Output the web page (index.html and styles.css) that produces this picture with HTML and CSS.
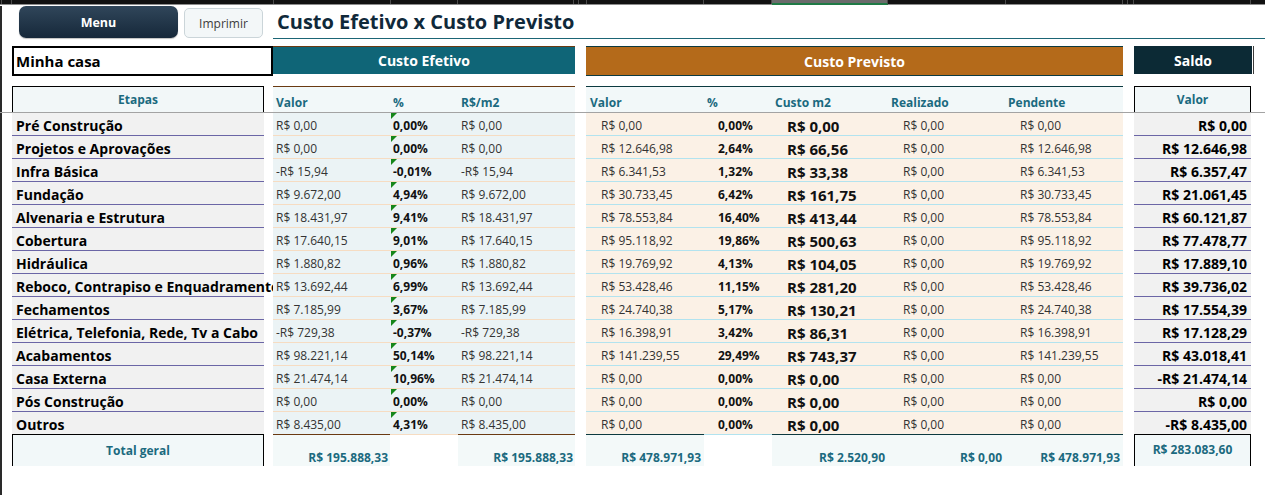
FILE: index.html
```html
<!DOCTYPE html>
<html lang="pt-BR">
<head>
<meta charset="utf-8">
<title>Custo Efetivo x Custo Previsto</title>
<link rel="stylesheet" href="styles.css">
</head>
<body>
<div class="colbar">
  <span style="width:2px"></span><span style="width:10px"></span><span style="width:262px"></span><span style="width:117px"></span><span style="width:67px"></span><span style="width:116px"></span><span style="width:5px"></span><span style="width:8px"></span><span style="width:117px"></span><span style="width:68px"></span><span class="sel" style="width:116px"></span><span style="width:118px"></span><span style="width:117px"></span><span style="width:5px"></span><span style="width:6px"></span><span style="width:117px"></span><span class="rest"></span>
</div>
<div class="sheet">
  <div class="toolbar">
    <div class="tools">
      <button class="btn-menu">Menu</button>
      <button class="btn-print">Imprimir</button>
    </div>
    <h1 class="title">Custo Efetivo x Custo Previsto</h1>
  </div>

  <div class="grid band">
    <div class="project">Minha casa</div>
    <div class="band-ef">Custo Efetivo</div>
    <div class="band-pv">Custo Previsto</div>
    <div class="band-sd">Saldo</div>
  </div>

  <div class="grid subhead">
    <div class="sh-etapas">Etapas</div>
    <div class="sh-ef c3">Valor</div>
    <div class="sh-ef">%</div>
    <div class="sh-ef">R$/m2</div>
    <div class="sh-pv c7">Valor</div>
    <div class="sh-pv">%</div>
    <div class="sh-pv">Custo m2</div>
    <div class="sh-pv">Realizado</div>
    <div class="sh-pv">Pendente</div>
    <div class="sh-sd">Valor</div>
  </div>

  <div class="freeze"></div>

  <div class="rows">
    <div class="grid row">
      <div class="lab"><div class="labin">Pré Construção</div></div>
      <div class="ef c3">R$ 0,00</div><div class="ef pct">0,00%</div><div class="ef">R$ 0,00</div>
      <div class="pv c7">R$ 0,00</div><div class="pv pct">0,00%</div><div class="pv m2">R$ 0,00</div><div class="pv">R$ 0,00</div><div class="pv">R$ 0,00</div>
      <div class="sd">R$ 0,00</div>
    </div>
    <div class="grid row">
      <div class="lab"><div class="labin">Projetos e Aprovações</div></div>
      <div class="ef c3">R$ 0,00</div><div class="ef pct">0,00%</div><div class="ef">R$ 0,00</div>
      <div class="pv c7">R$ 12.646,98</div><div class="pv pct">2,64%</div><div class="pv m2">R$ 66,56</div><div class="pv">R$ 0,00</div><div class="pv">R$ 12.646,98</div>
      <div class="sd">R$ 12.646,98</div>
    </div>
    <div class="grid row">
      <div class="lab"><div class="labin">Infra Básica</div></div>
      <div class="ef c3">-R$ 15,94</div><div class="ef pct">-0,01%</div><div class="ef">-R$ 15,94</div>
      <div class="pv c7">R$ 6.341,53</div><div class="pv pct">1,32%</div><div class="pv m2">R$ 33,38</div><div class="pv">R$ 0,00</div><div class="pv">R$ 6.341,53</div>
      <div class="sd">R$ 6.357,47</div>
    </div>
    <div class="grid row">
      <div class="lab"><div class="labin">Fundação</div></div>
      <div class="ef c3">R$ 9.672,00</div><div class="ef pct">4,94%</div><div class="ef">R$ 9.672,00</div>
      <div class="pv c7">R$ 30.733,45</div><div class="pv pct">6,42%</div><div class="pv m2">R$ 161,75</div><div class="pv">R$ 0,00</div><div class="pv">R$ 30.733,45</div>
      <div class="sd">R$ 21.061,45</div>
    </div>
    <div class="grid row">
      <div class="lab"><div class="labin">Alvenaria e Estrutura</div></div>
      <div class="ef c3">R$ 18.431,97</div><div class="ef pct">9,41%</div><div class="ef">R$ 18.431,97</div>
      <div class="pv c7">R$ 78.553,84</div><div class="pv pct">16,40%</div><div class="pv m2">R$ 413,44</div><div class="pv">R$ 0,00</div><div class="pv">R$ 78.553,84</div>
      <div class="sd">R$ 60.121,87</div>
    </div>
    <div class="grid row">
      <div class="lab"><div class="labin">Cobertura</div></div>
      <div class="ef c3">R$ 17.640,15</div><div class="ef pct">9,01%</div><div class="ef">R$ 17.640,15</div>
      <div class="pv c7">R$ 95.118,92</div><div class="pv pct">19,86%</div><div class="pv m2">R$ 500,63</div><div class="pv">R$ 0,00</div><div class="pv">R$ 95.118,92</div>
      <div class="sd">R$ 77.478,77</div>
    </div>
    <div class="grid row">
      <div class="lab"><div class="labin">Hidráulica</div></div>
      <div class="ef c3">R$ 1.880,82</div><div class="ef pct">0,96%</div><div class="ef">R$ 1.880,82</div>
      <div class="pv c7">R$ 19.769,92</div><div class="pv pct">4,13%</div><div class="pv m2">R$ 104,05</div><div class="pv">R$ 0,00</div><div class="pv">R$ 19.769,92</div>
      <div class="sd">R$ 17.889,10</div>
    </div>
    <div class="grid row">
      <div class="lab"><div class="labin">Reboco, Contrapiso e Enquadramento</div></div>
      <div class="ef c3">R$ 13.692,44</div><div class="ef pct">6,99%</div><div class="ef">R$ 13.692,44</div>
      <div class="pv c7">R$ 53.428,46</div><div class="pv pct">11,15%</div><div class="pv m2">R$ 281,20</div><div class="pv">R$ 0,00</div><div class="pv">R$ 53.428,46</div>
      <div class="sd">R$ 39.736,02</div>
    </div>
    <div class="grid row">
      <div class="lab"><div class="labin">Fechamentos</div></div>
      <div class="ef c3">R$ 7.185,99</div><div class="ef pct">3,67%</div><div class="ef">R$ 7.185,99</div>
      <div class="pv c7">R$ 24.740,38</div><div class="pv pct">5,17%</div><div class="pv m2">R$ 130,21</div><div class="pv">R$ 0,00</div><div class="pv">R$ 24.740,38</div>
      <div class="sd">R$ 17.554,39</div>
    </div>
    <div class="grid row">
      <div class="lab"><div class="labin">Elétrica, Telefonia, Rede, Tv a Cabo</div></div>
      <div class="ef c3">-R$ 729,38</div><div class="ef pct">-0,37%</div><div class="ef">-R$ 729,38</div>
      <div class="pv c7">R$ 16.398,91</div><div class="pv pct">3,42%</div><div class="pv m2">R$ 86,31</div><div class="pv">R$ 0,00</div><div class="pv">R$ 16.398,91</div>
      <div class="sd">R$ 17.128,29</div>
    </div>
    <div class="grid row">
      <div class="lab"><div class="labin">Acabamentos</div></div>
      <div class="ef c3">R$ 98.221,14</div><div class="ef pct">50,14%</div><div class="ef">R$ 98.221,14</div>
      <div class="pv c7">R$ 141.239,55</div><div class="pv pct">29,49%</div><div class="pv m2">R$ 743,37</div><div class="pv">R$ 0,00</div><div class="pv">R$ 141.239,55</div>
      <div class="sd">R$ 43.018,41</div>
    </div>
    <div class="grid row">
      <div class="lab"><div class="labin">Casa Externa</div></div>
      <div class="ef c3">R$ 21.474,14</div><div class="ef pct">10,96%</div><div class="ef">R$ 21.474,14</div>
      <div class="pv c7">R$ 0,00</div><div class="pv pct">0,00%</div><div class="pv m2">R$ 0,00</div><div class="pv">R$ 0,00</div><div class="pv">R$ 0,00</div>
      <div class="sd">-R$ 21.474,14</div>
    </div>
    <div class="grid row">
      <div class="lab"><div class="labin">Pós Construção</div></div>
      <div class="ef c3">R$ 0,00</div><div class="ef pct">0,00%</div><div class="ef">R$ 0,00</div>
      <div class="pv c7">R$ 0,00</div><div class="pv pct">0,00%</div><div class="pv m2">R$ 0,00</div><div class="pv">R$ 0,00</div><div class="pv">R$ 0,00</div>
      <div class="sd">R$ 0,00</div>
    </div>
    <div class="grid row">
      <div class="lab"><div class="labin">Outros</div></div>
      <div class="ef c3">R$ 8.435,00</div><div class="ef pct">4,31%</div><div class="ef">R$ 8.435,00</div>
      <div class="pv c7">R$ 0,00</div><div class="pv pct">0,00%</div><div class="pv m2">R$ 0,00</div><div class="pv">R$ 0,00</div><div class="pv">R$ 0,00</div>
      <div class="sd">-R$ 8.435,00</div>
    </div>

    <div class="grid total">
      <div class="tot-label">Total geral</div>
      <div class="tot tot-ef c3">R$ 195.888,33</div>
      <div class="tot tot-ef c5">R$ 195.888,33</div>
      <div class="tot tot-pv c7">R$ 478.971,93</div>
      <div class="tot tot-pv c9">R$ 2.520,90</div>
      <div class="tot tot-pv">R$ 0,00</div>
      <div class="tot tot-pv">R$ 478.971,93</div>
      <div class="tot-sd">R$ 283.083,60</div>
    </div>
  </div>
</div>
</body>
</html>
```

FILE: styles.css
```css
* { box-sizing: border-box; }
html, body { margin: 0; padding: 0; }
body {
  width: 1265px;
  height: 495px;
  overflow: hidden;
  background: #fff;
  color: #000;
  font-family: "Open Sans", "Noto Sans", "DejaVu Sans", sans-serif;
}

/* hidden column header strip of the spreadsheet */
.colbar {
  display: flex;
  height: 5px;
  background: #111;
  border-bottom: 1px solid #8c8c8c;
}
.colbar span {
  height: 4px;
  border-right: 1px solid #4a4a4a;
  flex: none;
}
.colbar span.sel {
  background: #6b6b6b;
  border-bottom: 2px solid #1f7a45;
  height: 5px;
}
.colbar span.rest { flex: 1; border-right: 0; }

.sheet {
  height: 490px;
  border-left: 2px solid #2a2a2a;
  padding-left: 10px;
}

/* toolbar */
.toolbar {
  display: flex;
  height: 33px;
  margin-top: 1px;
}
.tools {
  width: 261px;
  flex: none;
  display: flex;
  align-items: flex-start;
  gap: 6px;
  padding-left: 7px;
}
.btn-menu {
  width: 159px;
  height: 32px;
  border: 0;
  border-radius: 7px;
  background: linear-gradient(#30465a, #16283a);
  box-shadow: 0 1px 1px rgba(0,0,0,0.25);
  color: #fff;
  font-family: inherit;
  font-size: 12.5px;
  font-weight: 700;
}
.btn-print {
  width: 79px;
  height: 30px;
  margin-top: 2px;
  border: 1px solid #cbd5d9;
  border-radius: 5px;
  background: #f3f7f8;
  color: #3c3c3c;
  font-family: inherit;
  font-size: 12px;
}
.title {
  flex: 1;
  margin: 0;
  height: 33px;
  border-bottom: 1px solid #1b6575;
  padding-left: 4px;
  font-size: 20px;
  line-height: 31px;
  font-weight: 700;
  color: #10293a;
}

/* shared grid of columns */
.grid {
  display: grid;
  grid-template-columns: 252px 9px 117px 68px 117px 11px 118px 68px 116px 117px 118px 11px 117px;
}
.c3 { grid-column: 3; }
.c5 { grid-column: 5; }
.c7 { grid-column: 7; }
.c9 { grid-column: 9; }

/* band of section titles */
.band {
  margin-top: 7px;
  height: 29px;
}
.project {
  grid-column: 1 / span 2;
  border: 2px solid #000;
  padding-left: 2px;
  font-size: 15px;
  font-weight: 700;
  line-height: 26px;
}
.band-ef, .band-pv, .band-sd {
  display: flex;
  align-items: center;
  justify-content: center;
  color: #fff;
  font-size: 14px;
  font-weight: 700;
}
.band-ef {
  grid-column: 3 / span 3;
  background: #0f6577;
  border-top: 1px solid #6a3a12;
  height: 28px;
}
.band-pv {
  grid-column: 7 / span 5;
  background: #b46a1a;
  border-top: 1px solid #0c3a40;
  border-bottom: 1px solid #0c3a40;
  height: 30px;
}
.band-sd {
  grid-column: 13;
  background: #0c2a35;
  height: 28px;
  margin-right: -2px;
  border-right: 1px solid #fff;
  box-shadow: 1px 0 0 #3c3c3c;
}

/* column headings */
.subhead {
  margin-top: 11px;
  height: 26px;
  color: #1b6a7f;
  font-size: 12px;
  font-weight: 700;
}
.sh-etapas, .sh-sd {
  border: 1px solid #000;
  border-bottom: 0;
  background: #f2f7f8;
  display: flex;
  justify-content: center;
  align-items: center;
}
.sh-etapas { grid-column: 1; }
.sh-sd { grid-column: 13; }
.sh-ef, .sh-pv {
  background: #f2f8f9;
  padding: 7px 0 0 3px;
  line-height: 18px;
  white-space: nowrap;
}
.sh-ef { border-top: 1px solid #6a3a12; }
.sh-pv { border-top: 1px solid #0c3a40; }
.sh-pv.c7 { padding-left: 4px; }

.freeze {
  height: 1px;
  margin-left: -12px;
  width: 1265px;
  background: #a3a3a3;
}

/* data rows */
.row { height: 23px; }
.row > div { height: 23px; line-height: 26px; white-space: nowrap; }
.lab { grid-column: 1 / span 2; overflow: hidden; }
.labin {
  width: 252px;
  height: 23px;
  background: #f1f1f1;
  border-bottom: 1px solid #6b66a6;
  padding-left: 4px;
  font-size: 14px;
  font-weight: 700;
  line-height: 25px;
  color: #000;
}
.ef {
  background: #ebf3f5;
  border-bottom: 1px solid #f6dcc2;
  padding-left: 3px;
  font-size: 12px;
  color: #333;
}
.pv {
  background: #fbf1e6;
  border-bottom: 1px solid #b2e3ef;
  padding-left: 15px;
  font-size: 12px;
  color: #333;
}
.pct {
  font-size: 12px;
  font-weight: 700;
  color: #111;
}
.ef.pct { position: relative; }
.ef.pct::before {
  content: "";
  position: absolute;
  left: 1px;
  top: 0;
  border-top: 6px solid #15861a;
  border-right: 6px solid transparent;
}
.pv.pct { padding-left: 14px; }
.m2 {
  font-size: 15px;
  font-weight: 700;
  color: #111;
}
.sd {
  grid-column: 13;
  background: #f1f1f1;
  border-bottom: 1px solid #6b66a6;
  padding-right: 4px;
  text-align: right;
  font-size: 14px;
  font-weight: 700;
  color: #000;
}

/* totals */
.total {
  height: 32px;
  margin-top: -1px;
  position: relative;
  font-weight: 700;
  color: #1b6a7f;
}
.tot-label, .tot-sd {
  border: 1px solid #000;
  border-bottom: 0;
  background: #f2f8f9;
  display: flex;
  justify-content: center;
  align-items: center;
  padding-bottom: 1px;
}
.tot-label { grid-column: 1; font-size: 12px; }
.tot-sd { grid-column: 13; font-size: 12px; padding-bottom: 2px; }
.tot {
  background: #f3f9f9;
  font-size: 12px;
  text-align: right;
  padding: 14px 3px 0 0;
  white-space: nowrap;
}
.tot-ef { border-top: 1px solid #6a3a12; padding-right: 2px; }
.tot-pv { border-top: 1px solid #0c3a40; }
```
